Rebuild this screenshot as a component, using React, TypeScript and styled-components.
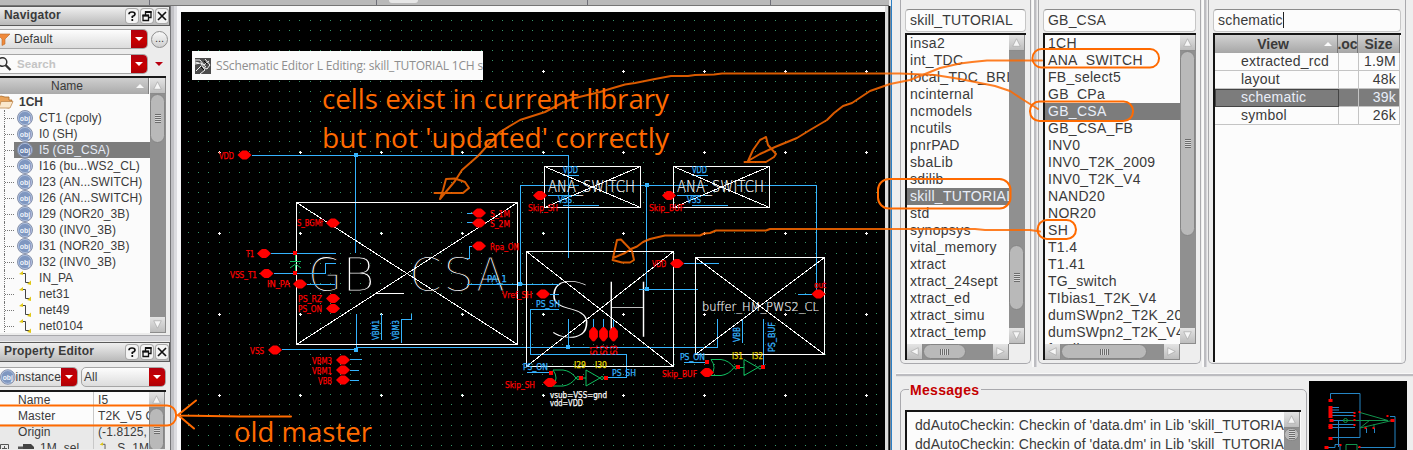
import React from "react";
import styled, { createGlobalStyle } from "styled-components";

const Global = createGlobalStyle`
  * { box-sizing: border-box; }
  body { margin: 0; background: #ececec; overflow: hidden; }
  body, text { font-family: "Liberation Sans", Arial, sans-serif; }
`;

const ORANGE = "#ff6a00";
const BLUE = "#35b4ff";
const RED = "#ff0000";
const GREEN = "#0fbf5f";

/* ---------- page frame ---------- */
const Desktop = styled.div`
  position: relative;
  width: 1413px;
  height: 450px;
  display: flex;
  overflow: hidden;
  background: #ececec;
  color: #3a3a3a;
  white-space: nowrap;
`;
const EditorWindow = styled.div`
  width: 891px;
  display: flex;
  flex-direction: column;
  flex: none;
`;
const ToolStrip = styled.div`
  height: 6px;
  width: 889px;
  flex: none;
  display: flex;
  background: #b9b9b9;
  border-bottom: 1px solid #757575;
`;
const StripCell = styled.div<{ $w: number }>`
  width: ${(p) => p.$w}px;
  border-right: 1px solid #6f6f78;
  display: flex;
`;
const StripTab = styled.div`
  width: 29px;
  height: 3px;
  margin-left: 12px;
  background: #e6e6e6;
  border-radius: 0 0 4px 4px;
`;
const EditorBody = styled.div`
  flex: 1;
  display: flex;
  min-height: 0;
`;
const Dock = styled.div`
  width: 170px;
  flex: none;
  display: flex;
  flex-direction: column;
  background: #ececec;
`;
const DockSplitter = styled.div`
  width: 11px;
  flex: none;
  background: linear-gradient(90deg, #77777a 0 1px, #c2c2c6 1px 4px, #dcdce0 4px 7px, #f8f8fa 7px 11px);
`;
const CanvasFrame = styled.div`
  position: relative;
  width: 704px;
  flex: none;
  padding-top: 6px;
  background: #fafafa;
`;
const WindowEdge = styled.div`
  width: 6px;
  flex: none;
  background: linear-gradient(90deg, #dcdcdc 0 3px, #4a4a4a 3px 4px, #050505 4px 5px, #7d8894 5px 6px);
`;
const CanvasSvg = styled.svg`
  display: block;
  background: #000;
`;

/* ---------- dock ---------- */
const DockTitle = styled.div`
  height: 20px;
  flex: none;
  display: flex;
  align-items: center;
  gap: 3px;
  padding: 0 1px 0 4px;
  font-size: 12px;
  font-weight: bold;
  letter-spacing: 0.18px;
  border: solid #5a5a5a;
  border-width: 1px 1px 1px 0;
  background: linear-gradient(#efefef, #b9b9b9);
`;
const TitleText = styled.span`
  flex: 1;
  margin-top: -2px;
`;
const TitleButton = styled.div`
  width: 12px;
  height: 14px;
  display: flex;
  border-radius: 3px;
  background: #f4f4f4;
  box-shadow: 0 0 0 1px #a9a9a9;
`;
const ComboRow = styled.div<{ $top: number; $gap: number }>`
  height: 20px;
  flex: none;
  display: flex;
  align-items: center;
  gap: ${(p) => p.$gap}px;
  margin-top: ${(p) => p.$top}px;
`;
const Combo = styled.div<{ $w: number; $open?: boolean; $plain?: boolean }>`
  width: ${(p) => p.$w}px;
  height: 20px;
  display: flex;
  align-items: center;
  overflow: hidden;
  font-size: 12px;
  border: 1px solid #a5a5a5;
  ${(p) => (p.$open ? "border-left: 0; border-radius: 0 5px 5px 0;" : "border-radius: 5px;")}
  background: ${(p) => (p.$plain ? "#fbfbfb" : "linear-gradient(#fdfdfd, #dcdcdc)")};
`;
const ComboText = styled.span<{ $hint?: boolean; $x: number }>`
  flex: 1;
  padding-left: ${(p) => p.$x}px;
  color: ${(p) => (p.$hint ? "#c4c4c4" : "#3a3a3a")};
  font-weight: ${(p) => (p.$hint ? "bold" : "normal")};
  font-size: ${(p) => (p.$hint ? 11.5 : 12)}px;
  letter-spacing: 0.1px;
`;
const ComboArrow = styled.div`
  width: 16px;
  height: 20px;
  flex: none;
  display: flex;
  align-items: center;
  justify-content: center;
  background: linear-gradient(#b00010, #c80000 60%, #a80008);
`;
const RoundButton = styled.div`
  width: 17px;
  height: 17px;
  border-radius: 50%;
  border: 1px solid #8f8f8f;
  background: linear-gradient(#f8f8f8, #cfcfcf);
  font-size: 11px;
  line-height: 12px;
  text-align: center;
`;
const Triangle = styled.div<{ $c: string; $dir?: "up" | "down"; $s?: number }>`
  width: 0;
  height: 0;
  border: solid transparent;
  border-width: ${(p) => (p.$dir === "up" ? `0 ${p.$s ?? 4}px ${p.$s ?? 4}px` : `${p.$s ?? 4}px ${p.$s ?? 4}px 0`)};
  border-${(p) => (p.$dir === "up" ? "bottom" : "top")}-color: ${(p) => p.$c};
`;
const TreeFrame = styled.div`
  height: 257px;
  width: 166px;
  margin-top: 2px;
  flex: none;
  display: flex;
  border-top: 2px solid #1a1a1a;
  background: #fbfbfb;
`;
const TreeMain = styled.div`
  width: 150px;
  flex: none;
`;
const TreeHeader = styled.div`
  height: 16px;
  width: 149px;
  display: flex;
  align-items: center;
  padding-left: 51px;
  gap: 53px;
  font-size: 12px;
  background: linear-gradient(#cfcfcf, #aaaaaa);
  border-right: 1px solid #808080;
`;
const TreeRow = styled.div`
  height: 16px;
  display: flex;
  align-items: center;
  font-size: 12px;
  line-height: 16px;
`;
const TreeBranch = styled.div`
  width: 10px;
  height: 16px;
  margin-left: 4px;
  border-left: 1px dotted #777;
  display: flex;
  align-items: center;
  &::after {
    content: "";
    flex: 1;
    border-top: 1px dotted #777;
  }
`;
const TreeLabel = styled.div<{ $sel?: boolean }>`
  flex: 1;
  height: 16px;
  display: flex;
  align-items: center;
  gap: 6px;
  padding-left: 3px;
  letter-spacing: 0.08px;
  color: ${(p) => (p.$sel ? "#e6ecf8" : "#3a3a3a")};
  background: ${(p) => (p.$sel ? "#7c7c7c" : "none")};
`;
const RootLabel = styled.b`
  padding-left: 5px;
`;
const DockGap = styled.div`
  height: 9px;
  flex: none;
  background: linear-gradient(#ececec 0 2px, #a8a8ac 2px 3px, #d4d4d8 3px 8px, #ececec 8px);
`;
const PropFrame = styled.div`
  height: 59px;
  width: 166px;
  margin-top: 3px;
  flex: none;
  display: flex;
  overflow: hidden;
  border-top: 2px solid #1a1a1a;
`;
const PropTable = styled.div`
  width: 149px;
  flex: none;
`;
const PropRow = styled.div<{ $alt?: boolean }>`
  height: 16px;
  display: flex;
  align-items: center;
  font-size: 12px;
  letter-spacing: 0.1px;
  background: ${(p) => (p.$alt ? "#e9e9e9" : "#fcfcfc")};
`;
const PropName = styled.div<{ $icon?: boolean }>`
  width: 94px;
  height: 16px;
  flex: none;
  display: flex;
  align-items: center;
  gap: 4px;
  padding-left: ${(p) => (p.$icon ? 0 : 18)}px;
  border-right: 1px solid #c8c8c8;
`;
const PropValue = styled.div`
  flex: 1;
  display: flex;
  align-items: center;
  gap: 6px;
  padding-left: 4px;
  overflow: hidden;
`;

/* ---------- scroll bars ---------- */
const Track = styled.div<{ $h?: boolean }>`
  display: flex;
  flex: none;
  flex-direction: ${(p) => (p.$h ? "row" : "column")};
  ${(p) => (p.$h ? "height: 16px;" : "width: 16px;")}
  background: #909090;
`;
const TrackButton = styled.div`
  width: 16px;
  height: 16px;
  flex: none;
  background: linear-gradient(#e4e4e4, #bdbdbd);
  border: solid #8c8c8c;
  border-width: 0 1px 1px 0;
`;
const Thumb = styled.div<{ $h?: boolean; $start: number; $len: number }>`
  flex: none;
  display: flex;
  align-items: center;
  justify-content: center;
  ${(p) =>
    p.$h
      ? `width:${p.$len}px;height:15px;margin-left:${p.$start}px;margin-right:auto;`
      : `height:${p.$len}px;width:15px;margin-top:${p.$start}px;margin-bottom:auto;`}
  border-radius: 8px;
  border: 1px solid #858585;
  background: #b9b9b9;
`;
const Grip = styled.div<{ $h?: boolean }>`
  ${(p) => (p.$h ? "width: 9px; height: 6px;" : "width: 6px; height: 9px;")}
  background: repeating-linear-gradient(${(p) => (p.$h ? "90deg" : "180deg")}, #6c6c6c 0 1px, #d8d8d8 1px 2px);
`;
const arrowPath = {
  up: "M8 4L12 12H4Z",
  down: "M8 12L12 4H4Z",
  left: "M4 8L12 4V12Z",
  right: "M12 8L4 4V12Z",
};
const ScrollArrow = ({ dir }: { dir: keyof typeof arrowPath }) => (
  <TrackButton>
    <svg width="15" height="15" viewBox="0 0 16 16" display="block">
      <path d={arrowPath[dir]} fill="#f6f6f6" stroke="#a5a5a5" strokeWidth=".7" />
    </svg>
  </TrackButton>
);
const ScrollBar = ({ h, start, len }: { h?: boolean; start: number; len: number }) => (
  <Track $h={h}>
    <ScrollArrow dir={h ? "left" : "up"} />
    <Thumb $h={h} $start={start} $len={len}>
      <Grip $h={h} />
    </Thumb>
    <ScrollArrow dir={h ? "right" : "down"} />
  </Track>
);

/* ---------- library manager ---------- */
const Manager = styled.div`
  flex: 1;
  display: flex;
  flex-direction: column;
  border-left: 1px solid #2b7fc4;
  background: #eeeeee;
  padding-left: 4px;
`;
const Columns = styled.div`
  height: 373px;
  flex: none;
  display: flex;
  padding-left: 4px;
`;
const Group = styled.div<{ $w: number }>`
  width: ${(p) => p.$w}px;
  height: 364px;
  flex: none;
  padding: 9px 4px 0;
  border: 1px solid #a9a9ad;
  border-top: 0;
  border-radius: 0 0 5px 5px;
`;
const ColumnSplitter = styled.div`
  width: 7px;
  height: 367px;
  flex: none;
  background: linear-gradient(90deg, #eeeeee 0 1px, #fafafa 1px 3px, #bdbdc1 3px 5px, #d6d6da 5px 6px, #eeeeee 6px);
`;
const Field = styled.div`
  height: 23px;
  display: flex;
  align-items: center;
  padding: 0 0 1px 4px;
  font-size: 14px;
  letter-spacing: 0.2px;
  border: 1px solid #c6c6c6;
  border-top-color: #8c8c8c;
  border-radius: 4px;
  background: #fcfcfc;
`;
const Caret = styled.i`
  width: 1px;
  height: 16px;
  background: #222;
`;
const ListFrame = styled.div<{ $h: number }>`
  height: ${(p) => p.$h}px;
  margin-top: 1px;
  display: flex;
  border: solid #151515;
  border-width: 2px 0 0 2px;
  background: #eeeeee;
`;
const ListColumn = styled.div<{ $w: number }>`
  width: ${(p) => p.$w}px;
  flex: none;
  background: #fcfcfc;
`;
const ListItems = styled.div`
  height: 309px;
  overflow: hidden;
`;
const Item = styled.div<{ $sel?: boolean }>`
  height: 17px;
  line-height: 17px;
  padding-left: 3px;
  overflow: hidden;
  font-size: 14px;
  letter-spacing: 0.3px;
  color: ${(p) => (p.$sel ? "#e9eef8" : "#3a3a3a")};
  background: ${(p) => (p.$sel ? "#7c7c7c" : "none")};
`;
const ListScroll = styled.div`
  height: 309px;
  display: flex;
`;
const ViewFrame = styled(ListFrame)`
  flex-direction: column;
  background: #fcfcfc;
`;
const ViewRow = styled.div<{ $sel?: boolean }>`
  height: 18px;
  width: 185px;
  flex: none;
  display: grid;
  grid-template-columns: 124px 20px 41px;
  line-height: 17px;
  font-size: 14px;
  letter-spacing: 0.25px;
  color: ${(p) => (p.$sel ? "#e9eef8" : "#3a3a3a")};
  background: ${(p) => (p.$sel ? "#7c7c7c" : "none")};
  & > div {
    border: solid #c4c4c4;
    border-width: 0 1px 1px 0;
  }
`;
const ViewName = styled.div<{ $sel?: boolean }>`
  padding-left: 26px;
  ${(p) => p.$sel && "outline: 1px solid #444; outline-offset: -1px;"}
`;
const ViewSize = styled.div`
  text-align: right;
  padding-right: 3px;
`;
const ViewHeader = styled.div`
  height: 18px;
  width: 185px;
  flex: none;
  display: grid;
  grid-template-columns: 123px 20px 42px;
  line-height: 18px;
  font-size: 14px;
  font-weight: bold;
  background: linear-gradient(#d2d2d2, #a6a6a6);
  & > div {
    border-right: 1px solid #777;
    overflow: hidden;
    display: flex;
    align-items: center;
    justify-content: center;
  }
`;
const ViewTitle = styled.div`
  gap: 35px;
  padding-left: 37px;
`;
const RowSplitter = styled.div`
  height: 4px;
  flex: none;
  background: linear-gradient(#f8f8f8 0 1px, #bcbcc0 1px 3px, #e4e4e4 3px);
`;
const Bottom = styled.div`
  flex: 1;
  display: flex;
  padding: 4px 0 0 4px;
`;
const Messages = styled.fieldset`
  width: 407px;
  height: 100px;
  flex: none;
  margin: 0 2px 0 0;
  padding: 12px 5px 0 4px;
  border: 1px solid #a9a9ad;
  border-radius: 5px;
`;
const Legend = styled.legend`
  height: 17px;
  padding: 0 2px 0 1px;
  margin-left: 4px;
  font-size: 14px;
  line-height: 18px;
  font-weight: bold;
  letter-spacing: 0.3px;
  color: #c40000;
`;
const MessageFrame = styled.div`
  height: 60px;
  display: flex;
  overflow: hidden;
  border: solid #151515;
  border-width: 2px 0 0 2px;
  background: #fcfcfc;
`;
const MessageList = styled.div`
  width: 377px;
  flex: none;
  overflow: hidden;
  padding: 4px 0 0 8px;
`;
const Message = styled.div`
  height: 19px;
  line-height: 19px;
  font-size: 14px;
  letter-spacing: 0.07px;
`;
const Preview = styled.svg`
  display: block;
  flex: none;
  background: #000;
`;

/* ---------- overlays ---------- */
const PastedTitle = styled.div`
  position: absolute;
  left: 11px;
  top: 45px;
  width: 291px;
  height: 29px;
  display: flex;
  align-items: center;
  gap: 5px;
  padding-left: 3px;
  overflow: hidden;
  background: #fbfbfb;
  color: #8e8e8e;
  font-family: "Open Sans", "Noto Sans", sans-serif;
  font-size: 12px;
  letter-spacing: -0.16px;
  & svg { flex: none; }
`;
const Notes = styled.svg`
  position: absolute;
  left: 0;
  top: 0;
  pointer-events: none;
  & text { font-family: "Open Sans", "Noto Sans", sans-serif; }
`;

/* ---------- icons ---------- */
const ObjIcon = ({ dim }: { dim?: boolean }) => (
  <svg width="16" height="16" viewBox="0 0 16 16">
    <circle cx="8" cy="8" r="7.5" fill={dim ? "#6a7fa8" : "#7f97c0"} stroke="#8a94ac" />
    <circle cx="8" cy="8" r="6.6" fill="none" stroke="#b9c8e2" strokeWidth=".8" />
    <text x="8" y="10.6" fontSize="7" fontWeight="bold" textAnchor="middle" fill="#eef3fb">obj</text>
  </svg>
);
const NetIcon = () => (
  <svg width="16" height="16" viewBox="0 0 16 16">
    <path d="M4 3.5H8.5V12.5H13" fill="none" stroke="#444" />
    <path d="M2 4L6 1V5ZM10 14L14 10.500V15Z" fill="#e0c818" />
  </svg>
);
const FolderIcon = () => (
  <svg width="14" height="14" viewBox="0 0 14 14">
    <path d="M-4 3L1 1L5 2L9 2V5L12 5L9 13L-4 11Z" fill="#e9a35a" stroke="#a86a28" strokeWidth=".8" />
    <path d="M1 6.500H13L10 13H-1Z" fill="#fbe8cc" stroke="#c08a50" strokeWidth=".8" />
  </svg>
);
const FunnelIcon = () => (
  <svg width="10" height="14" viewBox="0 0 10 14">
    <path d="M-3 2H10L5 7V12L2 13.500V7Z" fill="#f08a3c" stroke="#b86a28" strokeWidth=".6" />
  </svg>
);
const LensIcon = () => (
  <svg width="12" height="14" viewBox="0 0 12 14">
    <circle cx="2.500" cy="5" r="4.300" fill="#f4f4f4" stroke="#333" strokeWidth="1.500" />
    <path d="M5.500 8L10.500 13" stroke="#333" strokeWidth="2.400" />
  </svg>
);
const WaveIcon = () => (
  <svg width="16" height="16" viewBox="0 0 16 16">
    <rect width="16" height="16" fill="#4c4c4c" />
    <path d="M0 2L5 2L9 7L14 3M0 6L6 5L11 9M5 16L10 12L6 6M1 13L6 8M10 1L15 7L12 11L8 9M0 4L4 5" stroke="#f4f4f4" fill="none" />
    <path d="M6 9L9 12M9 3L12 6" stroke="#000" />
  </svg>
);
const TitleButtons = () => (
  <>
    <TitleButton>
      <svg width="12" height="14" viewBox="0 0 12 14">
        <path d="M3 5.200Q3 3 6 3T9 5.200Q9 6.500 6.300 7.500V9M6.300 10V12" fill="none" stroke="#111" strokeWidth="1.700" />
      </svg>
    </TitleButton>
    <TitleButton>
      <svg width="12" height="14" viewBox="0 0 12 14">
        <path d="M4.500 6V3H10V8.500H8M2 6.500H7.500V11.500H2Z" fill="none" stroke="#111" strokeWidth="1.300" />
        <path d="M4 3H10.500M1.400 6.500H8" stroke="#111" strokeWidth="2" />
      </svg>
    </TitleButton>
    <TitleButton>
      <svg width="12" height="14" viewBox="0 0 12 14">
        <path d="M2 3L10 11M10 3L2 11" stroke="#111" strokeWidth="1.700" />
      </svg>
    </TitleButton>
  </>
);

/* ---------- schematic ---------- */
const range = (n0: number, n1: number) => {
  const out: number[] = [];
  for (let n = n0; n <= n1; n++) out.push(n);
  return out;
};
const dots = range(-3, 65)
  .flatMap((i) => range(-5, 37).map((j) => `M${Math.floor(219 + i * 10.115)} ${Math.floor(71 + j * 10.115)}.5h1`))
  .join("");
const marks = [219, 300, 381, 462, 543, 623, 704, 785, 866]
  .flatMap((x) => [71, 152, 233, 314, 395].map((y) => `M${x - 1} ${y}.5h3M${x}.5 ${y - 1}v3`))
  .join("");

type LabelProps = { x: number; y: number; w: number; t: string; c?: string; s?: number; up?: boolean };
const WireText = styled.text`
  font-family: "DejaVu Sans", sans-serif;
`;
const ThinText = styled.text`
  font-family: "DejaVu Sans", sans-serif;
  font-weight: 200;
`;
const Label = ({ x, y, w, t, c = RED, s = 9, up }: LabelProps) => (
  <WireText
    x={x}
    y={y}
    fontSize={s}
    fill={c}
    stroke={c}
    strokeWidth=".25"
    textLength={w}
    lengthAdjust="spacingAndGlyphs"
    transform={up ? `rotate(-90 ${x} ${y})` : undefined}
  >
    {t}
  </WireText>
);
const Letter = ({ x, y, w, t, s = 47 }: LabelProps) => (
  <ThinText
    x={x}
    y={y}
    fontSize={s}
    fill="#fff"
    stroke="#000"
    strokeWidth={s > 60 ? 2.3 : 1.1}
    textLength={w}
    lengthAdjust="spacingAndGlyphs"
  >
    {t}
  </ThinText>
);
const CellName = ({ x, y, w, t, s }: LabelProps) => (
  <ThinText x={x} y={y} fontSize={s} fill="#fff" stroke="#fff" strokeWidth=".15" textLength={w} lengthAdjust="spacingAndGlyphs">
    {t}
  </ThinText>
);
const Pin = ({ x, y }: { x: number; y: number }) => (
  <path d={`M${x - 7} ${y}l3 -3l2 -1.500h4l2 1.500l3 3l-3 3l-2 1.500h-4l-2 -1.500z`} fill={RED} />
);
const VPin = ({ x }: { x: number }) => (
  <path d={`M${x - 1} 327.500h2l3 3.500v6l-3 4h-2l-3 -4v-6z`} fill={RED} stroke={RED} strokeWidth=".8" />
);
const Cell = ({ x, y, w, h }: { x: number; y: number; w: number; h: number }) => (
  <path d={`M${x} ${y}h${w}v${h}h${-w}zl${w} ${h}M${x + w} ${y}l${-w} ${h}`} fill="none" stroke="#fff" />
);
const Node = ({ x, y, c = RED }: { x: number; y: number; c?: string }) => (
  <rect x={x - 2} y={y - 2} width="4" height="4" fill={c} />
);
const Gate = ({ x, y }: { x: number; y: number }) => (
  <g fill="none" stroke={GREEN}>
    <path d={`M${x} ${y - 8}h10q8 1 13 8q-5 7 -13 8h-10q6 -8 0 -16`} />
    <circle cx={x + 25} cy={y} r="1.500" />
    <path d={`M${x + 33} ${y - 8}v16l14 -8zM${x + 29} ${y}h4`} />
    <circle cx={x + 49} cy={y} r="1.500" />
  </g>
);

const wires =
  "M252 155.500H568.500V258M355.500 155V253M271 253.500H336M274 273.500H325.500V263.500H336M307 284.500H335" +
  "M282 349.500H356.500V314M356 347.500H717.500V319M568.500 319V347M381.500 314V340M401.500 343V319.500H411.500V314" +
  "M350 359.500H362M350 370.500H359M350 380.500H359M467 213.500H473M467 222.500H473M472 246.500H469.500V258.500H467" +
  "M467 284.500H559M520.500 284V185.500H579M608 185.500H708M737 185.500H816.500V290M646.500 185V289M639 289.500H698" +
  "M563 175.500H579M548 195.500H579M563 205.500H599M692 175.500H708M677 195.500H708M692 205.500H728" +
  "M684 263.500H719M550 294.500H559M559 309.500H530.500V354.500H626.500V377.500H606M593.500 319V329M603.500 319V329M613.500 319V329" +
  "M527 372.500H551M798 294.500H812M742.500 319V343M763.500 319V366M684 362.500H706";

const Schematic = () => (
  <CanvasSvg width="704" height="438" viewBox="181 12 704 438">
    <path d={dots} stroke="#349468" shapeRendering="crispEdges" />
    <path d={marks} stroke="#fff" shapeRendering="crispEdges" />

    <Letter x={308} y={291} w={34} t="G" />
    <Letter x={342} y={291} w={33} t="B" />
    <Letter x={409} y={291} w={33} t="C" />
    <Letter x={443} y={291} w={31} t="S" />
    <Letter x={476} y={291} w={29} t="A" />
    <path d="M375 293.500H404" stroke="#fff" />
    <Letter x={545} y={338} w={50} t="S" s={78} />
    <Letter x={601} y={338} w={53} t="H" s={78} />

    <path d={wires} fill="none" stroke={BLUE} shapeRendering="crispEdges" />
    <g shapeRendering="crispEdges">
      <Cell x={296.5} y={202.5} w={221} h={142} />
      <Cell x={544.5} y={166.5} w={96} h={41} />
      <Cell x={673.5} y={166.5} w={96} h={41} />
      <Cell x={526.5} y={251.5} w={147} h={115} />
      <Cell x={695.5} y={257.5} w={129} h={97} />
    </g>
    <CellName x={548} y={192} w={87} t="ANA_SWITCH" s={15} />
    <CellName x={677} y={192} w={87} t="ANA_SWITCH" s={15} />
    <CellName x={702} y={310.5} w={117} t="buffer_HM_PWS2_CL" s={11.5} />
    <Label x={550} y={398} w={57} t="vsub=VSS=gnd" c="#fff" s={8.5} />
    <Label x={550} y={406} w={33} t="vdd=VDD" c="#fff" s={8.5} />

    <g shapeRendering="crispEdges">
      {[[356, 155], [356, 350], [568, 347], [520, 284], [647, 185], [647, 289]].map(([x, y]) => (
        <Node key={`${x}-${y}`} x={x} y={y} c={BLUE} />
      ))}
    </g>
    <path d="M295.500 255V261M290 261.500H301M290 268L295.500 264L301 268M295.500 265V272" stroke={GREEN} fill="none" />
    <Gate x={553} y={378} />
    <Gate x={711} y={367.5} />
    <g shapeRendering="crispEdges">
      {[[295, 253], [295, 273], [551, 373], [581, 378], [606, 378], [707, 362], [738, 367], [763, 367]].map(([x, y]) => (
        <Node key={`${x}-${y}`} x={x} y={y} />
      ))}
    </g>
    {[
      [244.5, 155], [264, 253.5], [266.5, 273.5], [300, 284], [333, 298.5], [333, 308.5], [275, 350],
      [343, 360], [343, 370], [343, 380], [333, 223], [479, 213], [479, 223], [479, 246], [540, 195.5],
      [669, 195.5], [677, 263.5], [543, 294], [550, 382.5], [707, 372.5], [818.5, 294],
    ].map(([x, y]) => (
      <Pin key={`${x}-${y}`} x={x} y={y} />
    ))}
    <VPin x={593.5} />
    <VPin x={603.5} />
    <VPin x={613.5} />

    <Label x={219} y={158.5} w={15} t="VDD" />
    <Label x={246} y={257} w={8} t="T1" />
    <Label x={230} y={277.5} w={27} t="VSS_T1" />
    <Label x={267} y={287} w={23} t="IN_PA" />
    <Label x={298} y={302} w={24} t="PS_RZ" />
    <Label x={298} y={312} w={24} t="PS_ON" />
    <Label x={250} y={353.5} w={14} t="VSS" />
    <Label x={312} y={363.5} w={20} t="VBM3" />
    <Label x={312} y={373.5} w={20} t="VBM1" />
    <Label x={318} y={383.5} w={14} t="VBB" />
    <Label x={297} y={226} w={26} t="S_BGMf" />
    <Label x={490} y={216.5} w={20} t="S_1M" />
    <Label x={490} y={226.5} w={20} t="S_2M" />
    <Label x={490} y={249.5} w={29} t="Rpa_ON" />
    <Label x={528} y={210.5} w={30} t="Skip_SH" />
    <Label x={649} y={210.5} w={35} t="Skip_BUF" />
    <Label x={652} y={267} w={14} t="VDD" />
    <Label x={502} y={297.5} w={30} t="Vref_SH" />
    <Label x={505} y={387.5} w={30} t="Skip_SH" />
    <Label x={662} y={376.5} w={35} t="Skip_BUF" />
    <Label x={814} y={287.5} w={12} t="out" />
    <Label x={597} y={355} w={10} t="S1" up />
    <Label x={607} y={355} w={10} t="S2" up />
    <Label x={617} y={355} w={10} t="S3" up />

    <Label x={563} y={172.5} w={15} t="VDD" c={BLUE} />
    <Label x={558} y={203} w={14} t="VSS" c={BLUE} />
    <Label x={692} y={172.5} w={15} t="VDD" c={BLUE} />
    <Label x={687} y={203} w={14} t="VSS" c={BLUE} />
    <Label x={487} y={281.5} w={20} t="PA_1" c={BLUE} />
    <Label x={536} y={306.5} w={24} t="PS_SH" c={BLUE} />
    <Label x={612} y={375.5} w={24} t="PS_SH" c={BLUE} />
    <Label x={523} y={370} w={25} t="PS_ON" c={BLUE} />
    <Label x={680} y={359.5} w={25} t="PS_ON" c={BLUE} />
    <Label x={378.5} y={340} w={20} t="VBM1" c={BLUE} up />
    <Label x={399} y={340} w={20} t="VBM3" c={BLUE} up />
    <Label x={740} y={342} w={15} t="VBB" c={BLUE} up />
    <Label x={774.5} y={352} w={30} t="PS_BUF" c={BLUE} up />

    <Label x={574} y={368} w={12} t="I29" c="#e8d800" s={8} />
    <Label x={595} y={368} w={12} t="I30" c="#e8d800" s={8} />
    <Label x={732} y={358.5} w={11} t="I31" c="#e8d800" s={8} />
    <Label x={752} y={358.5} w={11} t="I32" c="#e8d800" s={8} />
  </CanvasSvg>
);

const Annotations = () => (
  <Notes width="1413" height="450" viewBox="0 0 1413 450">
    <g fill={ORANGE} fontSize="27">
      <text x="322" y="109" textLength="347" lengthAdjust="spacingAndGlyphs">cells exist in current library</text>
      <text x="322" y="148" textLength="347" lengthAdjust="spacingAndGlyphs">but not 'updated' correctly</text>
      <text x="234" y="442" textLength="138" lengthAdjust="spacingAndGlyphs">old master</text>
    </g>
    <g fill="none" stroke={ORANGE} strokeWidth="2" strokeLinejoin="round" strokeLinecap="round">
      <rect x="1032.500" y="49" width="126.500" height="18.500" rx="9" />
      <rect x="1030" y="101.500" width="103" height="19.500" rx="9.500" />
      <rect x="878" y="179" width="132.500" height="29.500" rx="11" />
      <rect x="1037.500" y="220" width="38.500" height="19" rx="9.500" />
      <rect x="-20" y="405.500" width="196" height="20" rx="9" />
      <path d="M291 416.500H240L178 415.500M196 400.500L178 415L194 428.500" />
      <g opacity=".85">
        <path d="M1038 109L1022 99L1010 91L995 86L960 79L935 75L900 73.500H722L714 74.500L695 75L688 76H671L655 79L635 83L625 84.500L613 88L600 92L575 98L562 103L545 112L520 120L500 132L487 146L478 156L462 170L455 181L440 199L443 190L446 179L455 178.500L465 182L469 188L463 193H434.500" />
        <path d="M1042 60.500H987L972 62L960 63.500L940 68L925 74L910 80L890 84L870 91L852 103L843 106L834 113L827 120L810 130L797 138L775 147L760 154L748 161L753 150L760 140L766 137L768 145L776 154L774 157L766 162H744.500" />
        <path d="M1040 231.500L1030 230L985 230L975 229H770L766 230.500H716L710 233L704 233.500L700 235.500H665L650 239L643 242L637 246.500L631 249L625 253L613 258L617 240L621 239.500L632 251L634 260L630 262.500H622L612.500 260" />
      </g>
    </g>
  </Notes>
);

const PreviewDrawing = () => (
  <Preview width="98" height="69" viewBox="1309 381 98 69">
    <g fill="none" strokeWidth="1">
      <path
        stroke="#2585c4"
        d="M1330.500 399V393.500H1360V437.500H1331M1331 407.500H1339M1331 410H1339M1331 412.500H1355M1331 415.500H1355M1331 420.500H1355M1331 424.500H1355M1331 427.500H1355M1338.500 421V447M1366.500 428V433M1374.500 428V433M1390 416.500H1395V447.500H1358M1325 447.500H1335V444.500H1340V450"
      />
      <path stroke="#12934c" d="M1360 412.500L1388 420.500H1343M1360 428L1392 420.500M1370 420L1360 428M1374 424L1374 428M1346 450V444.500H1357V450" />
      <circle cx="1345.500" cy="420.500" r="2" stroke="#12934c" />
    </g>
    {[[1330, 400], [1330, 407], [1330, 410], [1330, 413], [1330, 416], [1331, 420], [1330, 425], [1330, 427], [1330, 438], [1326, 447], [1392, 420], [1388, 416], [1355, 413], [1355, 416], [1355, 420], [1355, 425], [1360, 412], [1366, 428], [1374, 428], [1341, 445], [1360, 447]].map(([x, y], i) => (
      <rect key={i} x={x - 1.5} y={y - 1} width={i < 11 ? 4 : 2} height={i < 11 ? 3 : 2} fill="#f00" />
    ))}
  </Preview>
);

/* ---------- data ---------- */
const instances = [
  "CT1 (cpoly)", "I0 (SH)", "I5 (GB_CSA)", "I16 (bu...WS2_CL)", "I23 (AN...SWITCH)", "I26 (AN...SWITCH)",
  "I29 (NOR20_3B)", "I30 (INV0_3B)", "I31 (NOR20_3B)", "I32 (INV0_3B)",
];
const nets = ["IN_PA", "net31", "net49", "net0104"];
const libraries = [
  "insa2", "int_TDC", "local_TDC_BRI", "ncinternal", "ncmodels", "ncutils", "pnrPAD", "sbaLib", "sdilib",
  "skill_TUTORIAL", "std", "synopsys", "vital_memory", "xtract", "xtract_24sept", "xtract_ed", "xtract_simu", "xtract_temp",
];
const cells = [
  "1CH", "ANA_SWITCH", "FB_select5", "GB_CPa", "GB_CSA", "GB_CSA_FB", "INV0", "INV0_T2K_2009", "INV0_T2K_V4", "NAND20",
  "NOR20", "SH", "T1.4", "T1.41", "TG_switch", "TIbias1_T2K_V4", "dumSWpn2_T2K_2009", "dumSWpn2_T2K_V4", "feedbSW",
];
const views = [["extracted_rcd", "1.9M"], ["layout", "48k"], ["schematic", "39k"], ["symbol", "26k"]];
const log = "ddAutoCheckin: Checkin of 'data.dm' in Lib 'skill_TUTORIAL'";

type Span = [number, number];
const ListPanel = ({ items, selected, width, v, h }: { items: string[]; selected: string; width: number; v: Span; h: Span }) => (
  <ListFrame $h={327}>
    <ListColumn $w={width}>
      <ListItems>
        {items.map((t) => (
          <Item key={t} $sel={t === selected}>{t}</Item>
        ))}
      </ListItems>
      <ScrollBar h start={h[0]} len={h[1]} />
    </ListColumn>
    <ListScroll>
      <ScrollBar start={v[0]} len={v[1]} />
    </ListScroll>
  </ListFrame>
);

export default function App() {
  return (
    <>
      <Global />
      <Desktop>
        <EditorWindow>
          <ToolStrip>
            <StripCell $w={150} />
            <StripCell $w={227} />
            <StripCell $w={211}><StripTab /></StripCell>
            <StripCell $w={183} />
          </ToolStrip>
          <EditorBody>
            <Dock>
              <DockTitle>
                <TitleText>Navigator</TitleText>
                <TitleButtons />
              </DockTitle>
              <ComboRow $top={3} $gap={3}>
                <Combo $w={148} $open>
                  <FunnelIcon />
                  <ComboText $x={4}>Default</ComboText>
                  <ComboArrow><Triangle $c="#fff" /></ComboArrow>
                </Combo>
                <RoundButton>...</RoundButton>
              </ComboRow>
              <ComboRow $top={5} $gap={7}>
                <Combo $w={148} $open $plain>
                  <LensIcon />
                  <ComboText $x={5} $hint>Search</ComboText>
                  <ComboArrow><Triangle $c="#fff" /></ComboArrow>
                </Combo>
                <Triangle $c="#b80010" />
              </ComboRow>
              <TreeFrame>
                <TreeMain>
                  <TreeHeader>
                    Name
                    <Triangle $c="#fafafa" $dir="up" />
                  </TreeHeader>
                  <TreeRow>
                    <FolderIcon />
                    <RootLabel>1CH</RootLabel>
                  </TreeRow>
                  {instances.map((t) => (
                    <TreeRow key={t}>
                      <TreeBranch />
                      <TreeLabel $sel={t === "I5 (GB_CSA)"}>
                        <ObjIcon dim={t === "I5 (GB_CSA)"} />
                        {t}
                      </TreeLabel>
                    </TreeRow>
                  ))}
                  {nets.map((t) => (
                    <TreeRow key={t}>
                      <TreeBranch />
                      <TreeLabel>
                        <NetIcon />
                        {t}
                      </TreeLabel>
                    </TreeRow>
                  ))}
                </TreeMain>
                <ScrollBar start={0} len={49} />
              </TreeFrame>
              <DockGap />
              <DockTitle>
                <TitleText>Property Editor</TitleText>
                <TitleButtons />
              </DockTitle>
              <ComboRow $top={5} $gap={3}>
                <Combo $w={78} $open>
                  <ObjIcon />
                  <ComboText $x={-1}>instance</ComboText>
                  <ComboArrow><Triangle $c="#fff" /></ComboArrow>
                </Combo>
                <Combo $w={85}>
                  <ComboText $x={2}>All</ComboText>
                  <ComboArrow><Triangle $c="#fff" /></ComboArrow>
                </Combo>
              </ComboRow>
              <PropFrame>
                <PropTable>
                  <PropRow>
                    <PropName>Name</PropName>
                    <PropValue>I5</PropValue>
                  </PropRow>
                  <PropRow>
                    <PropName>Master</PropName>
                    <PropValue>T2K_V5 GB_CSA</PropValue>
                  </PropRow>
                  <PropRow $alt>
                    <PropName>Origin</PropName>
                    <PropValue>(-1.8125,</PropValue>
                  </PropRow>
                  <PropRow $alt>
                    <PropName $icon>
                      <svg width="36" height="16" viewBox="0 0 36 16">
                        <path d="M.5 4.500H8.500V12.500H.5ZM2 8.500H7M4.500 6V11" fill="none" stroke="#555" />
                        <path d="M23 4H31L34 7V12H23Z" fill="#444" />
                        <path d="M18 8H23" stroke="#555" strokeWidth="3" />
                      </svg>
                      1M_sel
                    </PropName>
                    <PropValue>
                      <NetIcon />
                      S_1M
                    </PropValue>
                  </PropRow>
                </PropTable>
                <ScrollBar start={0} len={43} />
              </PropFrame>
            </Dock>
            <DockSplitter />
            <CanvasFrame>
              <Schematic />
              <PastedTitle>
                <WaveIcon />
                SSchematic Editor L Editing: skill_TUTORIAL 1CH schematic
              </PastedTitle>
            </CanvasFrame>
            <WindowEdge />
          </EditorBody>
        </EditorWindow>

        <Manager>
          <Columns>
            <Group $w={131}>
              <Field>skill_TUTORIAL</Field>
              <ListPanel items={libraries} selected="skill_TUTORIAL" width={102} v={[194, 65]} h={[0, 43]} />
            </Group>
            <ColumnSplitter />
            <Group $w={163}>
              <Field>GB_CSA</Field>
              <ListPanel items={cells} selected="GB_CSA" width={135} v={[0, 185]} h={[0, 86]} />
            </Group>
            <ColumnSplitter />
            <Group $w={198}>
              <Field>schematic<Caret /></Field>
              <ViewFrame $h={329}>
                <ViewHeader>
                  <ViewTitle>
                    View
                    <Triangle $c="#fafafa" $dir="up" />
                  </ViewTitle>
                  <div>.oc</div>
                  <div>Size</div>
                </ViewHeader>
                {views.map(([name, size]) => (
                  <ViewRow key={name} $sel={name === "schematic"}>
                    <ViewName $sel={name === "schematic"}>{name}</ViewName>
                    <div />
                    <ViewSize>{size}</ViewSize>
                  </ViewRow>
                ))}
              </ViewFrame>
            </Group>
          </Columns>
          <RowSplitter />
          <Bottom>
            <Messages>
              <Legend>Messages</Legend>
              <MessageFrame>
                <MessageList>
                  <Message>{log}</Message>
                  <Message>{log}</Message>
                </MessageList>
                <ScrollBar start={0} len={13} />
              </MessageFrame>
            </Messages>
            <PreviewDrawing />
          </Bottom>
        </Manager>
        <Annotations />
      </Desktop>
    </>
  );
}
